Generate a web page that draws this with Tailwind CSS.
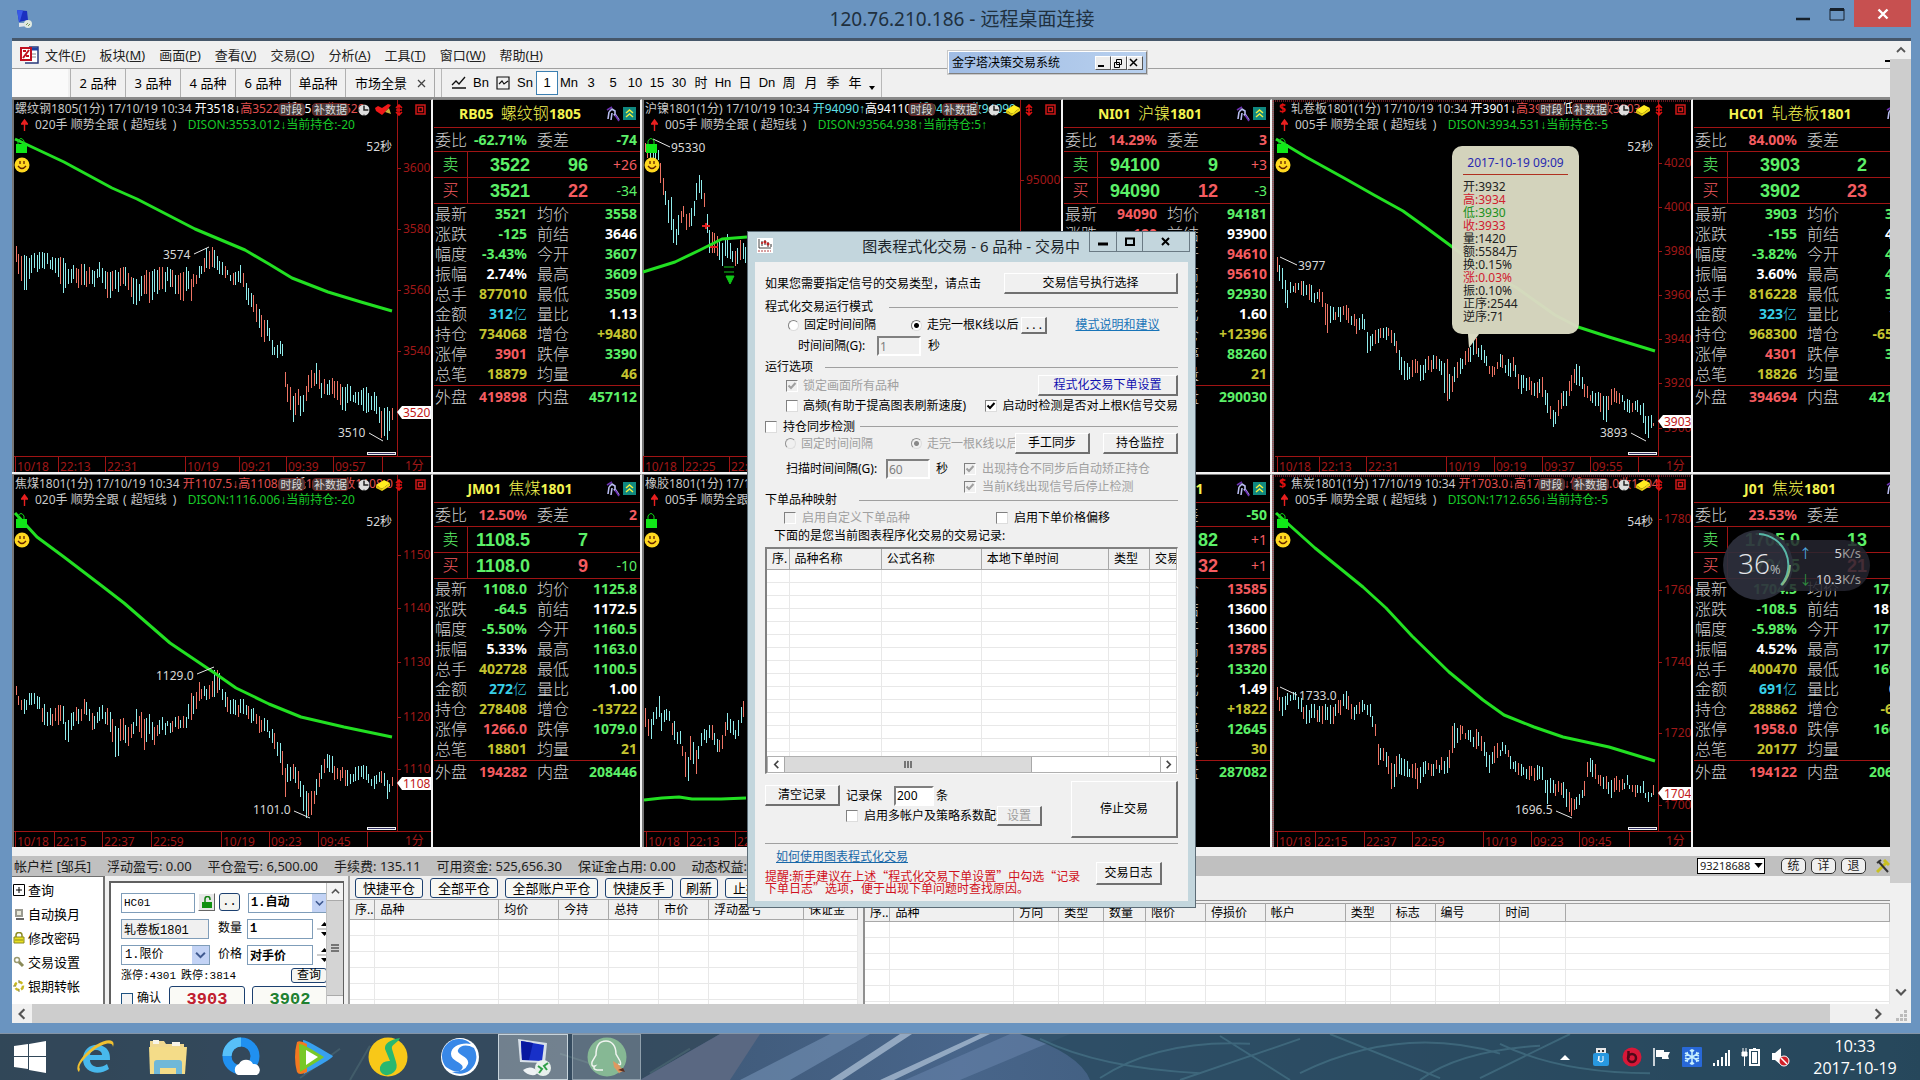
<!DOCTYPE html>
<html lang="zh-CN">
<head>
<meta charset="utf-8">
<title>120.76.210.186 - 远程桌面连接</title>
<script src="https://cdn.jsdelivr.net/npm/@tailwindcss/browser@4"></script>
</head>
<body class="flex h-screen flex-col overflow-hidden bg-[#2c4356] font-['Noto_Sans','Noto_Sans_CJK_SC',sans-serif] text-[12px] leading-[14px] text-black">

<svg class="hidden">
  <symbol id="tick" viewBox="0 0 12 12"><path d="M2.500 5.500 5 8l4.500-5" fill="none" stroke="currentColor" stroke-width="2"/></symbol>
  <symbol id="chev-l" viewBox="0 0 10 10"><path d="M7 1 3 5l4 4" fill="none" stroke="currentColor" stroke-width="1.800"/></symbol>
  <symbol id="chev-r" viewBox="0 0 10 10"><path d="M3 1l4 4-4 4" fill="none" stroke="currentColor" stroke-width="1.800"/></symbol>
  <symbol id="chev-u" viewBox="0 0 10 10"><path d="M1 7l4-4 4 4" fill="none" stroke="currentColor" stroke-width="1.800"/></symbol>
  <symbol id="chev-d" viewBox="0 0 10 10"><path d="M1 3l4 4 4-4" fill="none" stroke="currentColor" stroke-width="1.800"/></symbol>
  <symbol id="clock" viewBox="0 0 12 12"><circle cx="6" cy="6" r="5.500" fill="#ddd"/><path d="M6 2v4h4" fill="none" stroke="#222" stroke-width="1.500"/><path d="M6 0v1.500M6 10.500V12M0 6h1.500M10.500 6H12" stroke="#222"/></symbol>
  <symbol id="gold" viewBox="0 0 16 12"><path d="M1 6 9 1l6 3-8 6z" fill="#ffee20"/><path d="M1 6v3l6 3V10z" fill="#d8c010"/><path d="M7 10v2l8-5V4z" fill="#f0d818"/></symbol>
  <symbol id="heart" viewBox="0 0 16 12"><path d="M7 11 1 7 0 4l3-2 4 2 6-4 3 1-4 5z" fill="#f01818"/><path d="M10 8l4-4 2 6z" fill="#c8b040"/></symbol>
  <symbol id="anchor" viewBox="0 0 8 12"><path d="M4 1v10M1 4l3-3 3 3M1 8l3 3 3-3M1 6h6" fill="none" stroke="#e01010" stroke-width="1.600"/></symbol>
  <symbol id="pen" viewBox="0 0 14 16"><path d="M3 6l3-3 3 2v3l4 6M3 6l-1 7M6 7l-1 7M8 8l1 2" fill="none" stroke="#b8bcf0" stroke-width="1.600"/><path d="M1 4l5-3M9 9l4 6" stroke="#6a30b0" stroke-width="1.600"/></symbol>
</svg>

<main class="relative flex min-h-0 flex-1 flex-col border-r-[9px] border-b-[10px] border-l-[12px] border-[#6a94c0]">
  <header class="flex h-[38px] shrink-0 items-center bg-[#6a94c0]">
    <svg class="ml-[2px] h-5 w-5" viewBox="0 0 20 20"><path d="M3 1l10 1 1 9-9 2z" fill="#1a30c0"/><path d="M3 1l6 .6L6 12l-1 1z" fill="#3858e8"/><path d="M5 14h6l2 3-8 1z" fill="#dfe5ea"/><circle cx="14" cy="15" r="4" fill="#dfe8df"/><path d="M12 16l2-2M14 17l2-2" stroke="#7a9a5a"/></svg>
    <h1 class="flex-1 pl-[104px] text-center text-[19px] leading-6 text-[#20303e]">120.76.210.186 - 远程桌面连接</h1>
    <div class="flex h-full items-start">
      <button class="grid h-8 w-[34px] place-items-center" aria-label="最小化"><svg class="h-4 w-4" viewBox="0 0 16 16"><path d="M1 11h14" stroke="#16212c" stroke-width="2.500"/></svg></button>
      <button class="grid h-[27px] w-[34px] place-items-center" aria-label="最大化"><svg class="h-4 w-4" viewBox="0 0 16 16"><path d="M1 3h14v11H1z" fill="none" stroke="#16212c"/><path d="M1 3.500h14" stroke="#16212c" stroke-width="3"/></svg></button>
      <button class="grid h-[27px] w-[57px] place-items-center bg-[#c75050]" aria-label="关闭"><svg class="h-3 w-3" viewBox="0 0 12 12"><path d="M1.500 1.500l9 9M10.500 1.500l-9 9" stroke="#fff" stroke-width="2.400"/></svg></button>
    </div>
  </header>

  <div class="flex min-h-0 flex-1 border-t-[3px] border-[#46576a] bg-[#f0f0f0]">
    <div class="flex min-w-0 flex-1 flex-col overflow-hidden">
      <nav class="relative flex h-7 shrink-0 items-center border-b border-[#a0a0a0] pl-2 text-[13px]">
        <svg class="mr-[6px] h-[18px] w-[19px]" viewBox="0 0 19 18"><path d="M9 1h9v16H5" fill="#fff" stroke="#283878" stroke-width="1.500"/><path d="M9 3h9" stroke="#2040a0" stroke-width="3"/><path d="M12 8h4M12 11h4" stroke="#888"/><path d="M1 2h10v12H1z" fill="#fff" stroke="#c01020" stroke-width="2"/><path d="M3 12l6-8M3 5h3M6 10h3" stroke="#c01020" stroke-width="2"/></svg>
        <div class="flex gap-[14px] text-[#222]" id="menu"></div>
        <div class="absolute top-[10px] left-[936px] flex h-[23px] w-[199px] items-center border border-[#fff] border-r-[#808080] border-b-[#808080] bg-gradient-to-r from-[#a0bce4] to-[#b8d0ee] pr-[3px] pl-[3px] outline outline-[#c8c8c8]">
          <span class="flex-1 text-[12px]">金字塔决策交易系统</span>
          <button class="h-[14px] w-4 border border-white border-r-[#555] border-b-[#555] bg-[#ececec]" aria-label="最小化"><svg class="h-3 w-3" viewBox="0 0 12 12"><path d="M2 9h6" stroke="#000" stroke-width="2"/></svg></button>
          <button class="h-[14px] w-4 border border-white border-r-[#555] border-b-[#555] bg-[#ececec]" aria-label="还原"><svg class="h-3 w-3" viewBox="0 0 12 12"><path d="M4.500 2.500h5v5h-5zM2.500 5.500h5v5h-5z" fill="#ececec" stroke="#000"/></svg></button>
          <button class="h-[14px] w-4 border border-white border-r-[#555] border-b-[#555] bg-[#ececec]" aria-label="关闭"><svg class="h-3 w-3" viewBox="0 0 12 12"><path d="M2 2l7 7M9 2l-7 7" stroke="#000" stroke-width="1.500"/></svg></button>
        </div>
        <span class="ml-auto h-[2px] w-[5px] translate-y-[6px] bg-black"></span>
      </nav>

      <div class="flex h-[28px] shrink-0 items-center text-[13px]">
        <div class="flex h-full w-[56px] bg-[#fafafa]"></div>
        <div class="ml-[2px] flex h-full items-center border-r border-[#a8a8a8]" id="tabs"></div>
        <div class="ml-[6px] flex h-full items-center border-l border-[#b8b8b8]" id="periods"></div>
      </div>

      <section class="grid shrink-0 grid-cols-[421fr_209fr_421fr_209fr_421fr_197fr] border-t-2 border-[#8a8a8a]" id="grid"></section>

      <div class="mt-[7px] flex h-5 shrink-0 items-center gap-4 bg-[#c0c0c0] pl-[2px] text-[13px] whitespace-nowrap text-[#1c1c1c]">
        <span>帐户栏 [邹兵]</span><span>浮动盈亏: 0.00</span><span>平仓盈亏: 6,500.00</span><span>手续费: 135.11</span><span>可用资金: 525,656.30</span><span>保证金占用: 0.00</span><span>动态权益: 532,156.30</span>
        <span class="ml-auto flex items-center">
          <span class="relative flex"><select aria-label="帐户" class="h-4 w-[68px] appearance-none border border-black bg-white pl-[2px] text-[11px] leading-3"><option>93218688</option></select><svg class="pointer-events-none absolute top-[5px] right-[2px] h-[5px] w-[9px]" viewBox="0 0 10 6"><path d="M0 0h10L5 6z"/></svg></span>
          <button class="ml-4 h-4 w-[25px] rounded-[5px] border border-[#333] bg-[#f0f0f0] text-[12px] leading-3">统</button>
          <button class="ml-[5px] h-4 w-[25px] rounded-[5px] border border-[#333] bg-[#f0f0f0] text-[12px] leading-3">详</button>
          <button class="ml-[5px] h-4 w-[25px] rounded-[5px] border border-[#333] bg-[#f0f0f0] text-[12px] leading-3">退</button>
          <svg class="ml-[10px] h-[15px] w-[14px]" viewBox="0 0 14 15"><path d="M1 13 11 3M8 1l5 5" stroke="#c8c020" stroke-width="3"/><path d="M2 2l10 11M1 4l4-3" stroke="#333" stroke-width="2"/></svg>
        </span>
      </div>

      <div class="flex min-h-0 flex-1 overflow-hidden">
        <ul class="flex w-[93px] shrink-0 flex-col border-t border-r-2 border-[#707070] bg-white pt-px text-[13px]">
          <li class="flex h-6 shrink-0 items-center gap-[3px] pl-[1px]"><svg class="h-3 w-3" viewBox="0 0 12 12"><path d="M.500.500h11v11H.500zM3 6h6M6 3v6" fill="none" stroke="#000"/></svg>查询</li>
          <li class="flex h-6 shrink-0 items-center gap-[3px] pl-[1px]"><svg class="h-3 w-3" viewBox="0 0 12 12"><path d="M2 1h8v8H2z" fill="#9a9a90"/><path d="M4 3h4v4H4z" fill="#e8e8d8"/><path d="M3 11h8" stroke="#666" stroke-width="2"/></svg>自动换月</li>
          <li class="flex h-6 shrink-0 items-center gap-[3px] pl-[1px]"><svg class="h-3 w-3" viewBox="0 0 12 12"><path d="M3 6V3a3 2.500 0 0 1 6 0v3" fill="none" stroke="#8a8a20" stroke-width="1.500"/><path d="M1 5h10v6H1z" fill="#e8e020" stroke="#8a8a20"/><path d="M2 8h8" stroke="#8a8a20"/></svg>修改密码</li>
          <li class="flex h-6 shrink-0 items-center gap-[3px] pl-[1px]"><svg class="h-3 w-3" viewBox="0 0 12 12"><path d="M4 4l6 6" stroke="#8a8a58" stroke-width="3"/><circle cx="4" cy="4" r="2.500" fill="#fff" stroke="#9a9a70" stroke-width="1.500"/></svg>交易设置</li>
          <li class="flex h-6 shrink-0 items-center gap-[3px] pl-[1px]"><svg class="h-3 w-3" viewBox="0 0 12 12"><circle cx="6" cy="6" r="4" fill="none" stroke="#c8b820" stroke-width="2.500" stroke-dasharray="4 2"/><path d="M6 0v3M6 9v3M0 6h3" stroke="#888860"/></svg>银期转帐</li>
        </ul>

        <form class="ml-1 mt-[5px] flex w-[235px] shrink-0 overflow-hidden border-t-2 border-r border-l-2 border-[#606060] bg-white" onsubmit="return false">
          <div class="min-w-0 flex-1 overflow-hidden pt-[10px] pl-[10px] font-['Liberation_Mono','Noto_Sans_CJK_SC',monospace]">
            <div class="flex h-5 w-[230px]">
              <input aria-label="合约" class="h-5 w-[74px] border border-[#7f9db9] px-[2px] text-[11px]" value="HC01">
              <button class="ml-[3px] grid h-[18px] w-[17px] place-items-center border border-white border-r-[#666] border-b-[#666] bg-[#e8e8e8]" aria-label="锁定"><svg class="h-3 w-3" viewBox="0 0 12 12"><path d="M4 6V3a2.500 2.500 0 0 1 5 0v1" fill="none" stroke="#108010" stroke-width="1.500"/><path d="M1 6h10v6H1z" fill="#109010"/></svg></button>
              <button class="ml-1 h-[18px] w-[21px] rounded-[3px] border border-[#1c4070] bg-[#f4f4f0] leading-3">..</button>
              <span class="relative ml-2 flex h-5"><select aria-label="开平" class="h-5 w-[80px] appearance-none border border-[#7f9db9] pl-[2px] text-[12px] leading-4 font-bold"><option>1.自动</option></select><svg class="pointer-events-none absolute top-[1px] right-[1px] h-[18px] w-[15px] bg-[#c3d3f5] p-[3px] text-[#405a90]"><use href="#chev-d"/></svg></span>
            </div>
            <div class="mt-[5px] flex h-[21px] w-[230px] items-center">
              <input aria-label="名称" readonly class="h-5 w-[88px] border border-[#7f9db9] bg-[#f0f0f0] px-[2px] text-[12px]" value="轧卷板1801">
              <label for="qty" class="ml-[9px]">数量</label>
              <input id="qty" class="ml-[5px] h-5 w-[66px] border border-[#7f9db9] px-[2px] font-bold" value="1">
              <svg class="ml-1 h-5 w-4" viewBox="0 0 16 20"><path d="M4 7l3.500-4L11 7zM4 13l3.500 4L11 13z"/><path d="M0 10h16" stroke="#999"/></svg>
            </div>
            <div class="mt-[5px] flex h-[21px] w-[230px] items-center">
              <span class="relative flex"><select aria-label="委托方式" class="h-5 w-[89px] appearance-none border border-[#7f9db9] pl-[3px] text-[12px] leading-4"><option>1.限价</option></select><svg class="pointer-events-none absolute top-[1px] right-[1px] h-[18px] w-[17px] bg-[#c3d3f5] p-[3px] text-[#405a90]"><use href="#chev-d"/></svg></span>
              <label for="prc" class="ml-[8px]">价格</label>
              <input id="prc" class="ml-[5px] h-5 w-[66px] border border-[#7f9db9] px-[2px] font-bold" value="对手价">
              <svg class="ml-1 h-5 w-4" viewBox="0 0 16 20"><path d="M4 7l3.500-4L11 7zM4 13l3.500 4L11 13z"/><path d="M0 10h16" stroke="#999"/></svg>
            </div>
            <div class="mt-[2px] flex h-[17px] w-[206px] items-center text-[11px]">
              <span>涨停:4301</span><span class="ml-[5px]">跌停:3814</span>
              <button class="ml-auto h-[15px] w-[36px] rounded-[3px] border border-[#1c4070] bg-[#f6f6f2] text-[12px] leading-3">查询</button>
            </div>
            <div class="mt-[2px] flex h-7 w-[230px] items-start">
              <label class="mt-[6px] flex items-center gap-1"><input type="checkbox" class="h-3 w-3 appearance-none border border-[#1c5180] bg-[#f4f4f4]">确认</label>
              <button class="ml-[8px] h-7 w-[76px] shrink-0 rounded-[3px] border border-[#1c4070] bg-[#fafaf6] text-[17px] leading-5 font-bold text-[#c02030]">3903</button>
              <button class="ml-[7px] h-7 w-[76px] shrink-0 rounded-[3px] border border-[#1c4070] bg-[#fafaf6] text-[17px] leading-5 font-bold text-[#208030]">3902</button>
            </div>
          </div>
          <div class="flex w-[17px] flex-col border-l border-[#c0c0c0] bg-[#f4f4f4]">
            <span class="grid h-[17px] place-items-center"><svg class="h-[9px] w-[9px] text-[#555]"><use href="#chev-u"/></svg></span>
            <span class="grid h-[96px] place-items-center border-y border-[#aaa] bg-[#d4d4d4]"><svg class="h-2 w-[8px]" viewBox="0 0 8 8"><path d="M0 1h8M0 4h8M0 7h8" stroke="#555" stroke-width="1.500"/></svg></span>
          </div>
        </form>

        <div class="ml-[4px] flex min-w-0 shrink-0 flex-col overflow-hidden border-l-2 border-[#a0a0a0] pt-[2px]">
          <div class="flex h-5 shrink-0 gap-[7px] pl-[5px] text-[13px] whitespace-nowrap">
            <button class="h-5 w-[68px] rounded-[3px] border border-[#1c4070] bg-[#f8f8f4] leading-4">快捷平仓</button>
            <button class="h-5 w-[68px] rounded-[3px] border border-[#1c4070] bg-[#f8f8f4] leading-4">全部平仓</button>
            <button class="h-5 w-[93px] rounded-[3px] border border-[#1c4070] bg-[#f8f8f4] leading-4">全部账户平仓</button>
            <button class="h-5 w-[68px] rounded-[3px] border border-[#1c4070] bg-[#f8f8f4] leading-4">快捷反手</button>
            <button class="h-5 w-[38px] rounded-[3px] border border-[#1c4070] bg-[#f8f8f4] leading-4">刷新</button>
            <button class="h-5 w-[68px] rounded-[3px] border border-[#1c4070] bg-[#f8f8f4] leading-4">止损止盈</button>
          </div>
          <table class="mt-[1px] w-[508px] table-fixed border-collapse border-t border-[#b0b0b0] bg-white" id="positions"></table>
        </div>
        <div class="ml-[5px] mt-[24px] min-w-0 flex-1 overflow-hidden border-t border-l-2 border-[#909090] bg-[#f0f0f0] pt-[2px]">
          <table class="w-full table-fixed border-collapse border-t border-[#a0a0a0] bg-white" id="orders"></table>
        </div>
      </div>

      <div class="flex h-[19px] shrink-0 items-center bg-[#f0f0f0]">
        <span class="grid w-5 place-items-center"><svg class="h-3 w-3 text-[#555]"><use href="#chev-l"/></svg></span>
        <span class="h-full flex-1 bg-[#cdcdcd]"></span>
        <span class="grid w-[60px] place-items-center pl-9"><svg class="h-3 w-3 text-[#555]"><use href="#chev-r"/></svg></span>
      </div>
    </div>

    <div class="flex w-[21px] shrink-0 flex-col items-center bg-[#f0f0f0]">
      <span class="grid h-[18px] place-items-center"><svg class="h-[10px] w-[10px] text-[#555]"><use href="#chev-u"/></svg></span>
      <span class="w-full flex-1 bg-[#cdcdcd]"></span>
      <span class="grid h-[121px] place-items-end pb-[6px]"><svg class="h-3 w-3 text-[#555]"><use href="#chev-d"/></svg></span>
      <svg class="h-[19px] w-3" viewBox="0 0 12 19"><path d="M9 6h3v3H9zM5 10h3v3H5zM9 10h3v3H9zM1 14h3v3H1zM5 14h3v3H5zM9 14h3v3H9z" fill="#bbb"/></svg>
    </div>
  </div>

  <!-- K-line tooltip -->
  <aside class="absolute top-[146px] left-[1440px] h-[188px] w-[127px] rounded-[10px] bg-[#dadac2]/97 px-[11px] pt-[10px]">
    <p class="border-b border-[#b03020] pb-[4px] text-center text-[12px] whitespace-nowrap text-[#2828b0]">2017-10-19 09:09</p>
    <ul class="mt-[5px] leading-[13px] text-[#222]">
      <li>开:3932</li><li class="text-[#d02030]">高:3934</li><li class="text-[#209020]">低:3930</li><li class="text-[#d02030]">收:3933</li><li>量:1420</li><li>额:5584万</li><li>换:0.15%</li><li class="text-[#d02030]">涨:0.03%</li><li>振:0.10%</li><li>正序:2544</li><li>逆序:71</li>
    </ul>
    <svg class="absolute top-[188px] left-4 h-[14px] w-3" viewBox="0 0 12 14"><path d="M0 0h11L1 14z" fill="#dadac2"/></svg>
  </aside>

  <!-- network speed widget -->
  <aside class="absolute top-[529px] left-[1711px] flex h-[73px] w-[147px] items-center">
    <div class="absolute right-0 h-[51px] w-[90px] rounded-r-[26px] bg-[#24252f]/85"></div>
    <svg class="absolute left-0 h-[73px] w-[71px]" viewBox="0 0 71 73"><circle cx="35" cy="36" r="35" fill="#2e303d" fill-opacity=".92"/><path d="M36 5a31 31 0 0 1 22 51" fill="none" stroke="#58b8a8" stroke-width="2"/><path d="M67 36a31 31 0 0 1-8 20" fill="none" stroke="#88b880" stroke-width="2"/></svg>
    <p class="relative w-[68px] pl-[15px] text-[28px] leading-8 font-light whitespace-nowrap text-[#e4e6ea] font-['Open_Sans','Noto_Sans',sans-serif]">36<span class="text-[13px]">%</span></p>
    <div class="relative ml-2 w-[62px] text-[13px] text-[#d0d2d8]">
      <p class="flex justify-between leading-[26px]"><span class="text-[#50a8e0]">↑</span><span>5<span class="text-[#999]">K/s</span></span></p>
      <p class="flex justify-between leading-[26px]"><span class="text-[#309040]">↓</span><span>10.3<span class="text-[#999]">K/s</span></span></p>
    </div>
  </aside>

  <!-- program trading dialog -->
  <section class="absolute top-[231px] left-[735px] w-[449px] border border-[#5c6c76] bg-[#c3d6dd] px-[7px] pb-[6px]">
    <header class="flex h-[30px] items-start">
      <svg class="mt-[6px] ml-[2px] h-[15px] w-4" viewBox="0 0 16 15"><path d="M0 0h16v15H0z" fill="#fff"/><path d="M2 1v9h12" fill="none" stroke="#444"/><path d="M5 3v5M8 2v5M11 4v5M14 6v3" stroke="#333"/><circle cx="5" cy="5" r="1" fill="#c02020"/><circle cx="8" cy="4" r="1.500" fill="#c02020"/><circle cx="11" cy="6" r="1.500" fill="#c02020"/><path d="M1 13h13" stroke="#b04040" stroke-dasharray="2 1"/></svg>
      <h2 class="mt-1 flex-1 pr-[9px] text-right text-[15px] leading-5 text-[#1c242a]">图表程式化交易 - 6 品种 - 交易中</h2>
      <div class="-mr-[2px] flex h-5 border border-t-0 border-[#6a7a84]">
        <button class="grid w-[27px] place-items-center border-r border-[#6a7a84]" aria-label="最小化"><svg class="h-3 w-3" viewBox="0 0 12 12"><path d="M1 8h10" stroke="#000" stroke-width="3"/></svg></button>
        <button class="grid w-[26px] place-items-center border-r border-[#6a7a84]" aria-label="最大化"><svg class="h-3 w-3" viewBox="0 0 12 12"><path d="M2 2.500h8v6.500H2z" fill="none" stroke="#000" stroke-width="2"/></svg></button>
        <button class="grid w-[46px] place-items-center" aria-label="关闭"><svg class="h-3 w-3" viewBox="0 0 12 12"><path d="M2 2l7 7M9 2l-7 7" stroke="#000" stroke-width="2"/></svg></button>
      </div>
    </header>
    <form class="flex flex-col bg-[#f0f0f0] pt-[11px] pr-[10px] pb-[7px] pl-[10px] whitespace-nowrap" onsubmit="return false">
      <div class="flex h-[21px] items-center justify-between"><span>如果您需要指定信号的交易类型，请点击</span><button class="h-[21px] w-[174px] border border-white border-r-2 border-b-2 border-r-[#707070] border-b-[#707070]">交易信号执行选择</button></div>
      <h3 class="mt-[5px] flex h-4 items-center gap-4">程式化交易运行模式<span class="h-px flex-1 bg-[#a0a0a0]"></span></h3>
      <div class="mt-px flex h-[18px] items-center pl-[23px]">
        <label class="flex w-[123px] items-center gap-[5px]"><input type="radio" name="mode" class="h-[11px] w-[11px] appearance-none rounded-full border border-[#808080] border-r-[#ddd] border-b-[#ddd] bg-white">固定时间间隔</label>
        <label class="flex items-center gap-[5px]"><input type="radio" name="mode" checked class="h-[11px] w-[11px] appearance-none rounded-full border border-[#707070] border-r-[#ddd] border-b-[#ddd] bg-white bg-[radial-gradient(circle,#000_2px,transparent_3px)]">走完一根K线以后</label>
        <button class="ml-[3px] h-[17px] w-[26px] border border-white border-r-2 border-b-2 border-r-[#707070] border-b-[#707070] leading-[10px]">. . .</button>
        <a href="#" class="ml-[28px] text-[#1874b8] underline">模式说明和建议</a>
      </div>
      <div class="mt-[2px] flex h-5 items-center pl-[33px]"><label for="gap1" class="w-[79px]">时间间隔(G):</label><input id="gap1" disabled value="1" class="h-5 w-11 border-2 border-[#808080] border-r-white border-b-white px-[1px] text-[#808080]"><span class="ml-[7px]">秒</span></div>
      <h3 class="mt-1 flex h-[14px] items-center gap-[12px]">运行选项<span class="h-px flex-1 bg-[#a0a0a0]"></span></h3>
      <div class="mt-px flex h-[21px] items-center justify-between pl-[21px]">
        <label class="flex items-center gap-[5px] text-[#a0a0a0]"><span class="grid"><input type="checkbox" checked disabled class="col-start-1 row-start-1 h-3 w-3 appearance-none border border-[#808080] border-r-white border-b-white bg-[#f0f0f0]"><svg class="pointer-events-none col-start-1 row-start-1 h-3 w-3"><use href="#tick"/></svg></span>锁定画面所有品种</label>
        <button class="h-[21px] w-[140px] border border-white border-r-2 border-b-2 border-r-[#707070] border-b-[#707070] text-[#1010b0]">程式化交易下单设置</button>
      </div>
      <div class="mt-[2px] flex h-4 items-center pl-[21px]">
        <label class="flex w-[201px] items-center gap-[5px]"><input type="checkbox" class="h-3 w-3 appearance-none border border-[#808080] border-r-[#ddd] border-b-[#ddd] bg-white">高频(有助于提高图表刷新速度)</label>
        <label class="flex items-center gap-[6px]"><span class="grid"><input type="checkbox" checked class="col-start-1 row-start-1 h-3 w-3 appearance-none border border-[#808080] border-r-[#ddd] border-b-[#ddd] bg-white"><svg class="pointer-events-none col-start-1 row-start-1 h-3 w-3"><use href="#tick"/></svg></span>启动时检测是否对上根K信号交易</label>
      </div>
      <h3 class="mt-[6px] flex h-[13px] items-center gap-[5px]"><label class="flex items-center gap-[6px]"><input type="checkbox" class="h-3 w-3 appearance-none border border-[#808080] border-r-[#ddd] border-b-[#ddd] bg-white">持仓同步检测</label><span class="h-px flex-1 bg-[#a0a0a0]"></span></h3>
      <div class="flex h-[21px] items-center pl-5 text-[#a0a0a0]">
        <label class="flex w-[126px] items-center gap-[5px]"><input type="radio" name="sync" disabled class="h-[11px] w-[11px] appearance-none rounded-full border border-[#909090] border-r-[#ddd] border-b-[#ddd]">固定时间间隔</label>
        <label class="flex w-[104px] items-center gap-[5px] overflow-hidden"><input type="radio" name="sync" checked disabled class="h-[11px] w-[11px] shrink-0 appearance-none rounded-full border border-[#909090] border-r-[#ddd] border-b-[#ddd] bg-[radial-gradient(circle,#888_2px,transparent_3px)]">走完一根K线以后</label>
        <button class="h-[21px] w-[75px] border border-white border-r-2 border-b-2 border-r-[#707070] border-b-[#707070] text-black">手工同步</button>
        <button class="ml-auto h-[21px] w-[75px] border border-white border-r-2 border-b-2 border-r-[#707070] border-b-[#707070] text-black">持仓监控</button>
      </div>
      <div class="mt-[5px] flex h-5 items-center pl-[21px]">
        <label for="gap2" class="w-[100px]">扫描时间间隔(G):</label><input id="gap2" disabled value="60" class="h-5 w-11 border-2 border-[#808080] border-r-white border-b-white px-[1px] text-[#808080]"><span class="ml-[6px] w-[28px]">秒</span>
        <label class="flex items-center gap-[6px] text-[#a0a0a0]"><span class="grid"><input type="checkbox" checked disabled class="col-start-1 row-start-1 h-3 w-3 appearance-none border border-[#808080] border-r-white border-b-white bg-[#f0f0f0]"><svg class="pointer-events-none col-start-1 row-start-1 h-3 w-3"><use href="#tick"/></svg></span>出现持仓不同步后自动矫正持仓</label>
      </div>
      <div class="mt-px flex h-[14px] items-center pl-[199px]">
        <label class="flex items-center gap-[6px] text-[#a0a0a0]"><span class="grid"><input type="checkbox" checked disabled class="col-start-1 row-start-1 h-3 w-3 appearance-none border border-[#808080] border-r-white border-b-white bg-[#f0f0f0]"><svg class="pointer-events-none col-start-1 row-start-1 h-3 w-3"><use href="#tick"/></svg></span>当前K线出现信号后停止检测</label>
      </div>
      <h3 class="flex h-3 items-center gap-[22px]">下单品种映射<span class="h-px flex-1 bg-[#a0a0a0]"></span></h3>
      <div class="mt-[5px] flex h-[14px] items-center pl-[19px]">
        <label class="flex w-[212px] items-center gap-[6px] text-[#a0a0a0]"><input type="checkbox" disabled class="h-3 w-3 appearance-none border border-[#808080] border-r-white border-b-white">启用自定义下单品种</label>
        <label class="flex items-center gap-[6px]"><input type="checkbox" class="h-3 w-3 appearance-none border border-[#808080] border-r-[#ddd] border-b-[#ddd] bg-white">启用下单价格偏移</label>
      </div>
      <p class="mt-[4px] h-[14px] pl-[9px]">下面的是您当前图表程序化交易的交易记录:</p>
      <div class="mt-1 flex h-[227px] flex-col overflow-hidden border-t-2 border-r border-b border-l-2 border-[#808080] border-r-white border-b-white bg-white">
        <div class="flex-1 overflow-hidden"><table class="w-full table-fixed border-collapse" id="records"></table></div>
        <div class="flex h-[17px] shrink-0 border border-[#b0b0b0] bg-white">
          <span class="grid w-4 place-items-center"><svg class="h-[9px] w-[9px] text-[#444]"><use href="#chev-l"/></svg></span>
          <span class="grid w-[248px] place-items-center border-x border-[#a8a8a8] bg-[#dadada]"><svg class="h-[7px] w-2" viewBox="0 0 8 7"><path d="M1 0v7M4 0v7M7 0v7" stroke="#555" stroke-width="1.500"/></svg></span>
          <span class="ml-auto grid w-4 place-items-center border-l border-[#b0b0b0]"><svg class="h-[9px] w-[9px] text-[#444]"><use href="#chev-r"/></svg></span>
        </div>
      </div>
      <div class="mt-[7px] flex justify-between">
        <div class="pt-1">
          <div class="flex h-[21px] items-center"><button class="h-[21px] w-[75px] border border-white border-r-2 border-b-2 border-r-[#707070] border-b-[#707070]">清空记录</button><label for="keep" class="ml-[6px] w-[48px]">记录保</label><input id="keep" value="200" class="h-5 w-10 border-2 border-[#808080] border-r-white border-b-white bg-white px-[1px]"><span class="ml-[2px]">条</span></div>
          <div class="flex h-5 items-center pl-[81px]"><label class="flex w-[151px] items-center gap-[6px] overflow-hidden"><input type="checkbox" class="h-3 w-3 shrink-0 appearance-none border border-[#808080] border-r-[#ddd] border-b-[#ddd] bg-white">启用多帐户及策略系数配置</label><button disabled class="h-5 w-[45px] border border-white border-r-2 border-b-2 border-r-[#707070] border-b-[#707070] text-[#a0a0a0]">设置</button></div>
        </div>
        <button class="h-[57px] w-[107px] border border-white border-r-2 border-b-2 border-r-[#707070] border-b-[#707070]">停止交易</button>
      </div>
      <hr class="mt-[5px] border-[#a0a0a0]">
      <div class="mt-[6px] flex items-start justify-between">
        <div>
          <a href="#" class="ml-[11px] block h-4 text-[#1868a8] underline">如何使用图表程式化交易</a>
          <p class="mt-1 font-['Noto_Sans_CJK_SC',sans-serif] leading-3 text-[#d01020]">提醒:新手建议在上述“程式化交易下单设置”中勾选“记录<br>下单日志”选项，便于出现下单问题时查找原因。</p>
        </div>
        <button class="mt-3 mr-4 h-[23px] w-[66px] border border-white border-r-2 border-b-2 border-r-[#707070] border-b-[#707070]">交易日志</button>
      </div>
    </form>
  </section>
</main>

<footer class="relative flex h-[47px] shrink-0 items-center overflow-hidden border-t border-[#8494a6] bg-linear-to-r from-[#2c4052] via-[#48658a] to-[#27465a] pl-[14px] text-white">
  <svg class="absolute inset-0 h-full w-full" viewBox="0 0 1920 47" preserveAspectRatio="none">
    <path d="M0 0h720L640 47H0z" fill="#33495a" fill-opacity=".8"/><path d="M640 47 720 0h40l-30 47z" fill="#5a6882"/>
    <path d="M740 47 830 0h40L790 47z" fill="#7e9cc0" fill-opacity=".5"/><path d="M830 47 900 0h12L842 47zM880 47 980 0h10L894 47z" fill="#b4c6da" fill-opacity=".7"/><path d="M905 47 1010 0h60L960 47z" fill="#6c88b0" fill-opacity=".5"/>
    <path d="M1020 0q60 20 70 47h830V0z" fill="#27485c" fill-opacity=".75"/>
    <path d="M1040 5q60 30 160 35M1100 45q60-40 150-35M1180 47 1300 5M1220 2l70 45M1300 40q100-50 200-20M1420 47q40-30 120-35M1500 10q60 30 150 30M1330 0l110 45M1480 45l90-45" fill="none" stroke="#4f8294" stroke-opacity=".5" stroke-width="2"/>
    <path d="M300 45l40-30M350 47l20-35M560 20l60 20M650 40l40-25" stroke="#526f78" stroke-opacity=".5" stroke-width="2"/>
  </svg>
  <button class="relative w-8" aria-label="开始"><svg class="h-8 w-8" viewBox="0 0 32 32"><path d="M0 5l14-2v12H0zM15 3l17-3v15H15zM0 16h14v12L0 26zM15 16h17v16l-17-3z" fill="#fff"/></svg></button>
  <svg class="relative ml-[30px] h-9 w-10" viewBox="0 0 40 36"><path d="M34 21H14c0 8 11 9 17 4l2 5c-10 7-26 4-26-10C7 6 22 2 30 9c4 4 4 8 4 12zM14 16h12c0-6-11-7-12 0z" fill="#48b8ec"/><path d="M3 33C-3 28 8 14 20 6 30 0 40-1 37 8c0-6-10-4-19 3S1 27 4 30z" fill="#f0c030"/></svg>
  <svg class="relative ml-8 h-9 w-10" viewBox="0 0 40 36"><path d="M2 2h14l2 3h18v6H2z" fill="#f0d890"/><path d="M5 1h6v4H5zM24 3h8v4h-8z" fill="#f8f4e8"/><path d="M1 8h38l-2 27H2z" fill="#f4dc88"/><path d="M6 24q0-3 3-3h22q3 0 3 3v11h-6v-6H12v6H6z" fill="#70b8d8"/></svg>
  <svg class="relative ml-[34px] h-10 w-10" viewBox="0 0 40 40"><circle cx="19" cy="19" r="14" fill="none" stroke="#2090f0" stroke-width="9"/><path d="M5 19a14 14 0 0 1 14-14" fill="none" stroke="#58c0f8" stroke-width="9"/><path d="M16 38a6 6 0 0 1 1-11 8 8 0 0 1 14 0 6 6 0 0 1 4 11z" fill="#fff"/></svg>
  <svg class="relative ml-8 h-9 w-10" viewBox="0 0 40 36"><path d="M9 1q2-1 30 16-1 3-29 18z" fill="#38a0f0"/><path d="M3 3q3-2 10 2v28Q5 37 3 33-1 18 3 3z" fill="#f47820"/><path d="M5 5q3-1 25 13-2 2-24 15z" fill="#78c828"/><path d="M12 11l12 7-12 8z" fill="#fff"/></svg>
  <svg class="relative ml-[34px] h-10 w-10" viewBox="0 0 40 40"><circle cx="20" cy="20" r="19.500" fill="#f8c818"/><path d="M32 1c-3 6-9 6-8 11l4 13q2 6-2 10-4 4-9 3-6-2-5-8 2-6 9-6h1l-5-12q-1-8 15-11z" fill="#28b870"/></svg>
  <svg class="relative ml-8 h-10 w-10" viewBox="0 0 40 40"><circle cx="20" cy="20" r="19" fill="#fff"/><path d="M31 7A17 17 0 0 0 6 30q12 8 16 2c4-6-11-7-11-15S22 5 31 7z" fill="#3888e8"/><path d="M34 11A17 17 0 0 1 12 35q13 0 16-8c2-8-12-9-10-14s9-6 16-2z" fill="#3888e8"/></svg>
  <button class="relative ml-[18px] grid h-[46px] w-[70px] place-items-center border border-[#c8d4dc] bg-white/30" aria-label="远程桌面"><svg class="h-10 w-10" viewBox="0 0 40 40"><path d="M5 2l29 4-2 20-25-1z" fill="#d8e0e8"/><path d="M8 4l23 4-2 16-20-1z" fill="#1830c8"/><path d="M8 4l12 2-4 17H9z" fill="#0818a0"/><path d="M10 33q8-6 16 2l-4 3q-8 1-12-5z" fill="#eef2f4"/><circle cx="30" cy="31" r="8" fill="#e8f0ec"/><path d="M25 29l4 3-3 4M35 26l-4 3 3 4" fill="none" stroke="#30a048" stroke-width="2"/></svg></button>
  <button class="relative ml-1 grid h-[46px] w-[69px] place-items-center border border-[#90a0ac] bg-white/20" aria-label="QQ"><svg class="h-10 w-10" viewBox="0 0 40 40"><circle cx="20" cy="20" r="19.500" fill="#86b894"/><path d="M10 33q-5-1-2-4-4 1-3-4l4-7C9 8 13 4 19 4s10 5 10 13l4 7q2 5-2 3M10 33h6" fill="none" stroke="#f0f4f0" stroke-width="1.500"/><path d="M26 24l6 4 4 6-4 2-5-6z" fill="#e09860"/><path d="M31 33l5-2 2 4z" fill="#603020"/></svg></button>
  <div class="relative ml-auto flex items-center pr-[22px]">
    <svg class="h-2 w-3" viewBox="0 0 12 8"><path d="M1 7h10L6 2z" fill="#fff"/></svg>
    <svg class="ml-[20px] h-5 w-5" viewBox="0 0 20 20"><path d="M5 1h10v6H5z" fill="#e8e8e8"/><path d="M7 3h2v2H7zM11 3h2v2h-2z" fill="#333"/><rect x="2" y="6" width="16" height="13" rx="2" fill="#2898e0"/><path d="M8 9v5q2 2 4 0V9M8 9l-1 5" fill="none" stroke="#fff"/></svg>
    <svg class="ml-[11px] h-5 w-5" viewBox="0 0 20 20"><circle cx="10" cy="10" r="9.500" fill="#d81838"/><circle cx="10" cy="11" r="4" fill="none" stroke="#500818" stroke-width="2.500"/><path d="M6.500 4v7" stroke="#500818" stroke-width="2.500"/></svg>
    <svg class="ml-[10px] h-5 w-5" viewBox="0 0 20 20"><path d="M2 1v18" stroke="#fff" stroke-width="1.500"/><path d="M4 3h8v2h6l-2 4 1 3h-7v-2H4z" fill="#fff"/></svg>
    <svg class="ml-[10px] h-5 w-5" viewBox="0 0 20 20"><rect width="20" height="20" rx="1" fill="#2868d8"/><path d="M10 2v16M3 6l14 8M17 6 3 14M8 3l2 2 2-2M8 17l2-2 2 2M3 9l3-1-1-3M17 11l-3 1 1 3M3 11l3 1-1 3M17 9l-3-1 1-3" fill="none" stroke="#c8f0ff" stroke-width="1.500"/></svg>
    <svg class="ml-[9px] h-5 w-5" viewBox="0 0 20 20"><path d="M3 16v3M7 13v6M11 10v9M15 6v13M18 3v16" stroke="#fff" stroke-width="2"/></svg>
    <svg class="ml-[10px] h-5 w-5" viewBox="0 0 20 20"><path d="M9 3h9v15H9z" fill="none" stroke="#fff" stroke-width="2"/><path d="M12 1h3v2h-3zM11 5h5v11h-5z" fill="#fff"/><path d="M2 1v4M5 1v4M1 5h5v4H1zM3.500 9v10" stroke="#fff" fill="#fff"/></svg>
    <svg class="ml-[9px] h-5 w-5" viewBox="0 0 20 20"><path d="M2 6h3l6-5v17l-6-5H2z" fill="#fff"/><circle cx="14" cy="14" r="5" fill="#d02028" stroke="#fff"/><path d="M11 11l6 6" stroke="#fff" stroke-width="1.500"/></svg>
    <div class="ml-[22px] w-[86px] text-center text-[16px] leading-[22px] font-['Open_Sans','Noto_Sans',sans-serif] whitespace-nowrap"><p>10:33</p><p>2017-10-19</p></div>
  </div>
</footer>

<script>
const $ = id => document.getElementById(id);

$('menu').innerHTML = ['文件 F', '板块 M', '画面 P', '查看 V', '交易 O', '分析 A', '工具 T', '窗口 W', '帮助 H']
  .map(m => { const [t, k] = m.split(' '); return `<a href="#">${t}(<u>${k}</u>)</a>`; }).join('');

$('tabs').innerHTML = ['2 品种', '3 品种', '4 品种', '6 品种', '单品种']
  .map(t => `<button class="h-full w-[55px] border-l border-[#b0b0b0]">${t}</button>`).join('')
  + '<button class="flex h-full w-[89px] items-center justify-between border-l border-[#b0b0b0] pr-2 pl-[9px]">市场全景<svg class="h-[9px] w-[9px]" viewBox="0 0 9 9"><path d="M1 1l7 7M8 1L1 8" stroke="#444" stroke-width="1.300"/></svg></button>';

const linePic = '<svg class="h-4 w-4" viewBox="0 0 16 16"><path d="M1 10l4-4 3 3 6-7M1 13h14" fill="none" stroke="#111" stroke-width="1.300"/></svg>';
const boxPic = '<svg class="h-[14px] w-[14px]" viewBox="0 0 14 14"><path d="M1 1h12v12H1zM3 8l3-3 2 3 4-3" fill="none" stroke="#111" stroke-width="1.200"/></svg>';
$('periods').innerHTML = [linePic, 'Bn', boxPic, 'Sn', '1', 'Mn', '3', '5', '10', '15', '30', '时', 'Hn', '日', 'Dn', '周', '月', '季', '年']
  .map(p => p === '1'
    ? '<button class="h-6 w-[22px] border border-[#3c7fb1] bg-white font-[Liberation_Sans,sans-serif]">1</button>'
    : `<button class="grid h-6 w-[22px] place-items-center font-[Liberation_Sans,Noto_Sans_CJK_SC,sans-serif]">${p}</button>`).join('')
  + '<span class="flex h-full w-4 items-end border-r border-[#b8b8b8] pb-[7px] pl-[3px]"><svg class="h-1 w-[6px]" viewBox="0 0 6 4"><path d="M0 0h6L3 4z"/></svg></span>';
$('periods').firstElementChild.classList.add('ml-[6px]');

/* ---------- data tables ---------- */
function fillTable(id, cols, widths, rows, hClass, rClass) {
  const total = widths.reduce((a, b) => a + b, 0);
  $(id).innerHTML = `<colgroup>${widths.map(w => `<col style="width:${(w / total * 100).toFixed(3)}%">`).join('')}</colgroup>
    <thead><tr class="${hClass}">${cols.map(c => `<th class="overflow-hidden border-r border-b border-[#a8a8a8] bg-[#f0f0f0] p-0 pl-[5px] text-left font-normal whitespace-nowrap">${c}</th>`).join('')}</tr></thead>
    <tbody>${`<tr class="${rClass}">${cols.map(() => '<td class="border-r border-b border-[#e8e8e8] p-0"></td>').join('')}</tr>`.repeat(rows)}</tbody>`;
}
fillTable('positions', ['序..', '品种', '均价', '今持', '总持', '市价', '浮动盈亏', '保证金'], [25, 124, 60, 50, 50, 50, 95, 54], 6, 'h-5', 'h-4');
fillTable('orders', ['序..', '品种', '方向', '类型', '数量', '限价', '停损价', '帐户', '类型', '标志', '编号', '时间', ''], [25, 124, 45, 45, 42, 60, 60, 80, 45, 45, 65, 66, 324], 6, 'h-[18px]', 'h-4');
fillTable('records', ['序.', '品种名称', '公式名称', '本地下单时间', '类型', '交易'], [22, 92, 100, 127, 41, 27], 15, 'h-5', 'h-[13px]');

/* ---------- charts ---------- */
const arrows = s => s.replace(/[↑↓]/g, a => `<span class="font-[Liberation_Sans,sans-serif]">${a}</span>`);

function bars(c, X, Y) {
  let seed = 7, out = ['', ''];
  const rnd = () => (seed = (seed * 16807) % 2147483647) / 2147483647;
  const a = c.bars;
  let i = 0;
  for (let v = a[0][0]; v <= a[a.length - 1][0]; v += 6.3) {
    while (i < a.length - 2 && v > a[i + 1][0]) i++;
    const [x0, t0, b0] = a[i], [x1, t1, b1] = a[i + 1], k = Math.min(1, (v - x0) / (x1 - x0));
    const near = Math.min(k, 1 - k) < 0.25;
    const j = near ? 0 : (rnd() - 0.5) * 26, s = near ? 0 : rnd() * 10;
    const y0 = Y(t0 + (t1 - t0) * k + j + s), y1 = Y(b0 + (b1 - b0) * k + j - s);
    out[rnd() < 0.42 ? 0 : 1] += `M${Math.round(X(v)) + 0.5} ${Math.round(y0)}V${Math.max(Math.round(y1), Math.round(y0) + 3)}`;
  }
  return `<path d="${out[0]}" stroke="#ee7464"/><path d="${out[1]}" stroke="#90ecec"/>`;
}

function chart(c) {
  const X = v => c.ox + v / c.kx, Y = v => c.oy + v / 3, r = n => Math.round(n);
  const pts = a => a.map(p => r(X(p[0])) + ',' + r(Y(p[1]))).join(' ');
  const ax = c.axis;
  const left = c.sel ? 3 : 2;
  return `<div class="relative h-[375px] overflow-hidden border-t border-r-2 border-b-2 border-[#f2f2f2] border-t-[#808080] bg-black">
  <svg class="absolute inset-0 h-full w-full" viewBox="0 0 419 372" preserveAspectRatio="xMinYMin meet" font-size="12">
    <path d="M1 0V372" stroke="#777" stroke-width="2"/>
    ${c.sel ? '<path d="M1 1H418M1 1V372" stroke="#c03040" stroke-dasharray="1 1" fill="none"/>' : ''}
    <path d="M${ax}.5 0V356.500M${left} 356.500H419" stroke="#a01414" fill="none"/>
    ${c.ticks.map(([t, v]) => `<path d="M${ax} ${r(Y(v))}.5h4" stroke="#a01414"/><text x="${ax + 6}" y="${r(Y(v)) + 4}" fill="#a01818">${t}</text>`).join('')}
    ${c.times.map(([t, v]) => `<path d="M${r(X(v))}.5 356V372" stroke="#a01414"/><text x="${r(X(v)) + 2}" y="371" fill="#a01818">${t}</text>`).join('')}
    <text x="${ax + 8}" y="370" fill="#a01818">1分</text>
    ${bars(c, X, Y)}
    <polyline points="${pts(c.ma)}" fill="none" stroke="#22e022" stroke-width="3" stroke-linejoin="round"/>
    ${c.notes.map(([t, x, y, x1, y1, x2, y2]) => `<text x="${r(X(x))}" y="${r(Y(y)) + 4}" fill="#d8d8d8">${t}</text><path d="M${r(X(x1))} ${r(Y(y1))}L${r(X(x2))} ${r(Y(y2))}" stroke="#e8e8e8"/>`).join('')}
    <text x="${ax - 5}" y="51" text-anchor="end" fill="#d8d8d8">${c.sec}</text>
    <path d="M${ax - 30} 353.500h29" stroke="#f0f0f0" stroke-width="3"/><path d="M${ax - 29} 353.500h27" stroke="#303060"/>
    ${c.tag ? `<path d="M${ax} ${r(Y(c.tag[1]))}l5-6h29v13h-29z" fill="#fff"/><text x="${ax + 6}" y="${r(Y(c.tag[1])) + 5}" fill="#c01818">${c.tag[0]}</text>` : ''}
    <path d="M${left + 4} 45v-4q3-5 6 0v4" fill="none" stroke="#10d818"/><path d="M${left + 2} 44h11v9h-11z" fill="#10e818"/>
    <circle cx="${left + 8}" cy="65" r="7.500" fill="#ffd820"/><path d="M${left + 6} 61v3M${left + 10} 61v3M${left + 4} 66q4 5 8 0" fill="none" stroke="#602000" stroke-width="1.300"/>
    ${c.extra || ''}
  </svg>
  <div class="relative pt-px pl-[3px] leading-4 text-[#c8c8c8]"><p class="w-[384px] overflow-hidden whitespace-nowrap">${c.sel ? '<b class="pr-[5px] pl-1 text-[#e01010]">$</b>' : ''}${arrows(c.head)}</p><p class="flex h-4 overflow-hidden whitespace-nowrap"><svg class="mx-[6px] h-4 w-[7px] shrink-0" viewBox="0 0 7 16"><path d="M3.500 4v10M.5 7l3-4 3 4z" stroke="#e82020" fill="#e82020" stroke-width="1.400"/></svg><span class="ml-[1px]">${c.lots} 顺势全跟<span class="inline-block w-3 text-center">(</span>超短线<span class="inline-block w-4 pl-[6px]">)</span></span><span class="ml-[5px] text-[#18c828]">${arrows(c.ind)}</span></p></div>
  <div class="absolute top-[3px] right-0 flex items-center pr-[5px]">
    <button class="mr-[7px] h-[13px] w-[27px] rounded-[4px] border border-[#702020] bg-[#4a3c3c] text-[11px] leading-[10px] text-[#ddd]">时段</button>
    <button class="mr-[9px] h-[13px] w-[37px] rounded-[4px] border border-[#702020] bg-[#4a3c3c] text-[11px] leading-[10px] whitespace-nowrap text-[#ddd]">补数据</button>
    <svg class="mr-[5px] h-3 w-3"><use href="#clock"/></svg><svg class="mr-1 h-3 w-4"><use href="#${c.badge || 'gold'}"/></svg><svg class="mr-3 h-3 w-2"><use href="#anchor"/></svg>
    <svg class="h-[11px] w-[11px]" viewBox="0 0 11 11"><path d="M1 1h9v9H1zM3.500 3.500h4v4h-4z" fill="none" stroke="#d01818" stroke-width="1.500"/></svg>
  </div>
</div>`;
}

/* ---------- quote panels ---------- */
const tone = { g: 'text-[#5cf068]', r: 'text-[#f45c60]', w: 'text-white', y: 'text-[#c4c430]', c: 'text-[#38d0e8]', n: 'text-white' };
const L1 = ['最新', '涨跌', '幅度', '振幅', '总手', '金额', '持仓', '涨停', '总笔'];
const L2 = ['均价', '前结', '今开', '最高', '最低', '量比', '增仓', '跌停', '均量'];
const C1 = 'gggwycyry', C2 = 'gwgggwygy';

function quote(q) {
  const wide = q.wide;
  const v1 = wide ? 'w-[69px]' : 'w-[59px]';
  const line = (a, av, at, b, bv, bt, h) => `<div class="flex ${h} items-center pl-px">
    <span class="w-[33px] text-[16px] font-light text-[#d0d0d0]">${a}</span><span class="${v1} text-right text-[14px] font-bold ${tone[at]}">${av.replace('亿', '<span class="font-light">亿</span>')}</span>
    <span class="ml-[10px] w-[33px] text-[16px] font-light text-[#d0d0d0]">${b}</span><span class="flex-1 pr-[3px] text-right text-[14px] font-bold ${tone[bt]}">${bv}</span></div>`;
  const side = (n, o, t, qt) => `<div class="flex h-[26px] items-center border-t border-[#a01414]">
    <span class="h-full w-[34px] border-r border-[#a01414] text-center text-[16px] leading-[24px] font-light ${tone[t]}">${n}</span>
    <span class="${wide ? 'w-[72px]' : 'w-[62px]'} text-right font-[Liberation_Sans,sans-serif] text-[18px] font-bold text-[#5cf068]">${o[0]}</span>
    <span class="${wide ? 'w-[67px]' : 'w-[58px]'} text-right font-[Liberation_Sans,sans-serif] text-[18px] font-bold ${tone[qt]}">${o[1]}</span>
    <span class="flex-1 pr-[3px] text-right text-[14px] ${o[2].startsWith('+') ? tone.r : tone.g}">${o[2]}</span></div>`;
  return `<div class="h-[375px] overflow-hidden border-t border-b-2 border-[#f2f2f2] border-t-[#808080] bg-black pl-px whitespace-nowrap ${wide ? 'pl-[3px]' : 'border-r-2'}">
  <div class="${wide ? 'w-[226px]' : ''}">
    <div class="flex h-[27px] items-center pr-1">
      <h2 class="flex-1 text-center text-[14px] font-bold text-[#f4f450]">${q.code}&nbsp; <span class="text-[16px] font-light">${q.name}</span>${q.no}</h2>
      <svg class="mr-[3px] h-4 w-[14px]"><use href="#pen"/></svg><svg class="h-[13px] w-[13px] bg-[#108880]" viewBox="0 0 13 13"><path d="M3 6l3.500-3L10 6M3 10l3.500-3L10 10" fill="none" stroke="#f0f040" stroke-width="1.500"/></svg>
    </div>
    <div class="border-t border-[#a01414]">${line('委比', q.wb[0], q.wb[0][0] === '-' ? 'g' : 'r', '委差', q.wb[1], q.wb[1][0] === '-' ? 'g' : 'r', 'h-[23px]')}</div>
    ${side('卖', q.sell, 'g', 'g')}${side('买', q.buy, 'r', 'r')}
    <div class="border-y border-[#a01414] pb-[1px]">${L1.map((l, i) => line(l, q.a[i], (q.c1 || C1)[i], L2[i], q.b[i], (q.c2 || C2)[i], 'h-5')).join('')}</div>
    ${line('外盘', q.out[0], 'r', '内盘', q.out[1], 'g', 'h-[22px]')}
  </div></div>`;
}

const W = s => `<span class="text-white">${s}</span>`, R = s => `<span class="text-[#e05050]">${s}</span>`, C = s => `<span class="text-[#60e0e8]">${s}</span>`;

const rb = { ox: -12, kx: 2.412, oy: -100, axis: 385, sec: '52秒', lots: '020手', badge: 'heart',
  head: '螺纹钢1805(1分) 17/10/19 10:34 ' + W('开3518↓') + R('高3522↓') + W('低3518') + R('收3520'),
  ind: 'DISON:3553.012↓当前持仓:-20', tag: ['3520', 1235],
  ticks: [['3600', 503], ['3580', 686], ['3560', 870], ['3540', 1052]],
  times: [['10/18', 37], ['22:13', 139], ['22:31', 254], ['10/19', 447], ['09:21', 576], ['09:39', 689], ['09:57', 804], ['', 921]],
  notes: [['3574', 394, 764, 468, 762, 505, 740], ['3510', 816, 1299, 890, 1300, 925, 1322]],
  ma: [[37, 418], [155, 487], [270, 565], [330, 598], [470, 688], [590, 750], [650, 793], [705, 835], [790, 875], [870, 905], [945, 932]],
  bars: [[38,738,785],[60,770,885],[75,765,820],[100,755,805],[130,775,810],[155,775,890],[165,810,848],[200,790,855],[230,815,860],[240,785,830],[260,820,900],[295,800,850],[325,840,920],[345,825,880],[360,815,910],[385,800,870],[415,810,860],[440,820,910],[452,785,850],[458,840,910],[480,795,830],[500,738,800],[512,740,800],[540,795,830],[560,820,855],[580,795,850],[595,860,910],[610,880,930],[635,960,1030],[645,960,1000],[655,1020,1065],[680,1025,1060],[690,1140,1190],[705,1190,1270],[715,1155,1220],[725,1190,1250],[745,1120,1170],[765,1085,1150],[775,1150,1195],[800,1135,1180],[830,1165,1240],[840,1150,1200],[860,1180,1210],[880,1160,1240],[905,1180,1230],[922,1240,1325],[935,1215,1320],[947,1225,1250]] };

const jm = { ox: -12, kx: 2.412, oy: -5, axis: 385, sec: '52秒', lots: '020手',
  head: '焦煤1801(1分) 17/10/19 10:34 ' + R('开1107.5↓高1108.0↓') + W('低') + R('1107.5收1108.0'),
  ind: 'DISON:1116.006↓当前持仓:-20', tag: ['1108', 940],
  ticks: [['1150', 256], ['1140', 415], ['1130', 577], ['1120', 740], ['1110', 898]],
  times: [['10/18', 37], ['22:15', 131], ['22:37', 247], ['22:59', 365], ['10/19', 534], ['09:23', 650], ['09:45', 768], ['', 884]],
  notes: [['1129.0', 377, 617, 475, 612, 515, 592], ['1101.0', 611, 1020, 708, 1022, 748, 1045]],
  ma: [[35, 130], [90, 200], [155, 262], [245, 348], [300, 400], [410, 518], [520, 612], [570, 655], [650, 703], [725, 742], [830, 770], [945, 802]],
  bars: [[38,648,675],[55,690,735],[72,665,700],[90,680,720],[105,700,765],[120,715,765],[140,705,765],[155,710,760],[160,780,865],[170,730,780],[190,715,760],[203,685,730],[220,730,780],[245,705,745],[262,715,770],[278,770,865],[300,740,800],[310,775,830],[330,710,760],[345,750,845],[360,730,790],[372,770,825],[390,740,780],[412,760,790],[430,735,775],[448,740,775],[460,670,750],[480,635,690],[500,660,690],[518,595,680],[530,610,660],[545,680,725],[565,690,735],[585,685,730],[600,710,750],[625,740,790],[640,745,780],[660,785,830],[675,820,880],[688,900,990],[695,890,930],[715,890,940],[735,960,1045],[748,970,1045],[760,935,985],[780,870,910],[798,850,905],[815,900,930],[835,900,950],[860,890,930],[880,885,925],[900,920,960],[918,900,930],[933,930,990],[946,920,945]] };

const ni = { ox: -2, kx: 2.45, oy: -100, axis: 378, sec: '', lots: '005手',
  head: '沪镍1801(1分) 17/10/19 10:34 ' + C('开94090↑') + W('高94110↑') + C('低94080↓收94090'),
  ind: 'DISON:93564.938↑当前持仓:5↑',
  ticks: [['95000', 541]], times: [['10/18', 8], ['22:25', 106], ['22:49', 217]],
  notes: [['95330', 76, 443, 33, 418, 73, 440]],
  ma: [[8, 816], [86, 786], [147, 750], [200, 717], [262, 711]],
  bars: [[12,430,455],[25,440,475],[45,450,480],[52,490,570],[62,570,610],[68,600,665],[75,590,690],[85,680,740],[95,640,700],[103,600,650],[115,650,700],[125,625,680],[135,580,640],[143,520,575],[152,545,600],[160,600,660],[167,690,760],[185,700,760],[200,730,800],[215,700,770],[230,760,800],[245,720,780],[258,740,790]],
  extra: '<path d="M60 126h8M64 123v6M68 147h8" stroke="#e02020" stroke-width="2"/><path d="M84 176l4 8 4-8zM82 167h10M82 172h10" stroke="#10c818" fill="#10c818"/>' };

const ru = { ox: -22, kx: 2.376, oy: -35, axis: 378, sec: '', lots: '005手',
  head: '橡胶1801(1分) 17/10/19 10:34', ind: '', ticks: [],
  times: [['10/18', 61], ['22:13', 160], ['22:31', 273]], notes: [],
  ma: [[58, 1080], [100, 1073], [140, 1070], [170, 1076], [240, 1076], [300, 1073]],
  bars: [[60,805,860],[72,840,900],[82,800,840],[92,765,830],[98,820,875],[110,805,840],[128,840,900],[145,880,915],[155,940,1015],[160,960,1030],[168,880,950],[178,940,1015],[190,880,920],[205,870,910],[215,845,890],[228,895,935],[240,900,940],[254,815,870],[265,840,880],[278,860,900],[290,770,840],[297,790,840]] };

const hc = { ox: -12, kx: 2.376, oy: -100, axis: 386, sec: '52秒', lots: '005手', sel: true,
  head: '轧卷板1801(1分) 17/10/19 10:34 ' + W('开3901↓') + R('高3903↓') + W('低3901') + R('收3903'),
  ind: 'DISON:3934.531↓当前持仓:-5', tag: ['3903', 1262],
  ticks: [['4020', 488], ['4000', 620], ['3980', 752], ['3960', 884], ['3940', 1016], ['3920', 1148], ['3900', 1285]],
  times: [['10/18', 40], ['22:13', 139], ['22:31', 253], ['10/19', 443], ['09:19', 557], ['09:37', 671], ['09:55', 785], ['', 899]],
  notes: [['3977', 91, 797, 47, 772, 88, 795], ['3893', 809, 1299, 882, 1300, 918, 1322]],
  ma: [[38, 418], [110, 470], [200, 535], [270, 585], [340, 632], [400, 688], [455, 738], [520, 800], [610, 865], [700, 945], [755, 982], [830, 1010], [938, 1052]],
  bars: [[40,770,815],[48,800,850],[57,815,900],[63,880,940],[72,845,875],[85,850,880],[100,840,885],[120,855,905],[145,870,905],[158,910,1005],[170,920,960],[190,920,965],[205,915,960],[230,960,1005],[245,935,980],[255,1000,1065],[275,990,1030],[300,980,1020],[318,1000,1040],[330,1050,1110],[345,1090,1145],[360,1080,1130],[385,1100,1145],[395,1070,1110],[415,1065,1105],[430,1085,1120],[442,1070,1205],[455,1130,1180],[470,1080,1130],[490,1050,1090],[510,1010,1060],[530,1045,1085],[550,1100,1130],[570,1060,1100],[590,1080,1130],[600,1070,1110],[620,1125,1185],[640,1130,1170],[655,1150,1195],[670,1130,1190],[685,1190,1250],[698,1240,1290],[710,1190,1240],[725,1180,1225],[735,1135,1180],[755,1085,1150],[770,1150,1190],[795,1180,1215],[820,1190,1270],[835,1165,1210],[850,1175,1210],[875,1200,1240],[900,1200,1235],[912,1210,1280],[920,1250,1325],[930,1245,1275],[938,1250,1270]] };

const jt = { ox: -12, kx: 2.376, oy: -5, axis: 386, sec: '54秒', lots: '005手', sel: true,
  head: '焦炭1801(1分) 17/10/19 10:34 ' + R('开1703.0↓高1704.5↓低1703.0收1704.5'),
  ind: 'DISON:1712.656↓当前持仓:-5', tag: ['1704', 968],
  ticks: [['1780', 148], ['1760', 360], ['1740', 577], ['1720', 790], ['1700', 1006]],
  times: [['10/18', 40], ['22:15', 131], ['22:37', 248], ['22:59', 362], ['10/19', 531], ['09:23', 645], ['09:45', 759], ['', 876]],
  notes: [['1733.0', 92, 677, 47, 652, 88, 675], ['1696.5', 607, 1020, 703, 1022, 742, 1045]],
  ma: [[38, 130], [130, 235], [245, 350], [300, 415], [360, 498], [450, 605], [530, 690], [580, 735], [650, 772], [720, 800], [830, 832], [938, 872]],
  bars: [[40,652,690],[52,680,740],[65,670,705],[78,665,690],[95,680,720],[110,705,765],[125,700,740],[145,710,760],[165,705,765],[185,690,730],[203,660,715],[220,715,755],[240,690,725],[260,700,740],[272,740,780],[276,820,890],[295,835,870],[310,880,960],[328,850,910],[345,870,920],[360,880,920],[373,895,960],[390,870,910],[410,885,920],[430,860,900],[447,860,910],[457,755,840],[475,765,810],[495,780,810],[515,775,840],[530,810,850],[542,860,915],[560,820,870],[578,815,840],[595,860,900],[615,880,915],[640,890,930],[655,885,930],[670,890,930],[683,930,1005],[695,930,970],[710,935,965],[730,960,1020],[742,990,1045],[755,980,1010],[770,940,985],[777,875,920],[792,870,920],[810,920,950],[835,930,985],[855,930,965],[872,915,945],[890,945,980],[908,930,965],[924,970,1000],[935,945,975]] };

const quotes = [
  { code: 'RB05', name: '螺纹钢', no: '1805', wb: ['-62.71%', '-74'], sell: ['3522', '96', '+26'], buy: ['3521', '22', '-34'],
    a: ['3521', '-125', '-3.43%', '2.74%', '877010', '312亿', '734068', '3901', '18879'], b: ['3558', '3646', '3607', '3609', '3509', '1.13', '+9480', '3390', '46'], out: ['419898', '457112'] },
  { code: 'NI01', name: '沪镍', no: '1801', wb: ['14.29%', '3'], sell: ['94100', '9', '+3'], buy: ['94090', '12', '-3'], c1: 'rrrwycyry', c2: 'gwrrgwygy',
    a: ['94090', '190', '0.20%', '2.85%', '', '', '', '', ''], b: ['94181', '93900', '94610', '95610', '92930', '1.60', '+12396', '88260', '21'], out: ['', '290030'] },
  { code: 'HC01', name: '轧卷板', no: '1801', wide: true, wb: ['84.00%', '21'], sell: ['3903', '2', ''], buy: ['3902', '23', ''],
    a: ['3903', '-155', '-3.82%', '3.60%', '816228', '323亿', '968300', '4301', '18826'], b: ['3947', '4058', '4030', '4039', '3893', '1.10', '-65020', '3814', '43'], out: ['394694', '421534'] },
  { code: 'JM01', name: '焦煤', no: '1801', wb: ['12.50%', '2'], sell: ['1108.5', '7', ''], buy: ['1108.0', '9', '-10'],
    a: ['1108.0', '-64.5', '-5.50%', '5.33%', '402728', '272亿', '278408', '1266.0', '18801'], b: ['1125.8', '1172.5', '1160.5', '1163.0', '1100.5', '1.00', '-13722', '1079.0', '21'], out: ['194282', '208446'] },
  { code: 'RU01', name: '橡胶', no: '1801', wb: ['', '-50'], sell: ['', '82', '+1'], buy: ['', '32', '+1'], c2: 'rwwrgwygy',
    a: ['', '', '', '', '', '', '', '', ''], b: ['13585', '13600', '13600', '13785', '13320', '1.49', '+1822', '12645', '30'], out: ['', '287082'] },
  { code: 'J01', name: '焦炭', no: '1801', wide: true, wb: ['23.53%', '8'], sell: ['1705.0', '13', ''], buy: ['1704.5', '21', ''],
    a: ['1704.5', '-108.5', '-5.98%', '4.52%', '400470', '691亿', '288862', '1958.0', '20177'], b: ['1733.5', '1813.0', '1778.0', '1778.5', '1696.5', '0.98', '-6546', '1668.0', '19'], out: ['194122', '206348'] },
];
$('grid').innerHTML = [chart(rb), quote(quotes[0]), chart(ni), quote(quotes[1]), chart(hc), quote(quotes[2]),
  chart(jm), quote(quotes[3]), chart(ru), quote(quotes[4]), chart(jt), quote(quotes[5])].join('');
</script>
</body>
</html>
